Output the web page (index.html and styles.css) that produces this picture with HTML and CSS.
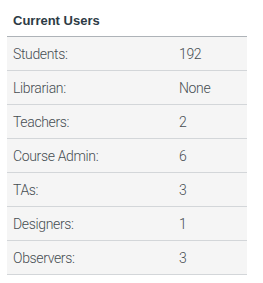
FILE: index.html
```html
<!DOCTYPE html>
<html>
<head>
<meta charset="utf-8">
<link rel="stylesheet" href="styles.css">
</head>
<body>
<section class="panel">
  <h2 class="panel-title">Current Users</h2>
  <div class="user-table">
    <div class="row"><span class="label">Students:</span><span class="value">192</span></div>
    <div class="row"><span class="label">Librarian:</span><span class="value">None</span></div>
    <div class="row"><span class="label">Teachers:</span><span class="value">2</span></div>
    <div class="row"><span class="label">Course Admin:</span><span class="value">6</span></div>
    <div class="row"><span class="label">TAs:</span><span class="value">3</span></div>
    <div class="row"><span class="label">Designers:</span><span class="value">1</span></div>
    <div class="row"><span class="label">Observers:</span><span class="value">3</span></div>
  </div>
</section>
</body>
</html>
```
FILE: styles.css
```css
html, body {
  margin: 0;
  padding: 0;
  background: #ffffff;
}
body {
  font-family: "Liberation Sans", Arial, sans-serif;
  color: #2d3b45;
}
.panel {
  padding-left: 7px;
  width: 240px;
}
.panel-title {
  margin: 0;
  font-size: 13px;
  font-weight: bold;
  height: 37px;
  line-height: 16px;
  padding: 13px 0 0 6px;
  box-sizing: border-box;
  border-bottom: 1px solid #aeb3b8;
  color: #2d3b45;
}
.user-table {
  display: flex;
  flex-direction: column;
}
.row {
  display: grid;
  grid-template-columns: 166px 1fr;
  height: 34px;
  box-sizing: border-box;
  align-items: center;
  background: #f5f5f5;
  border-bottom: 1px solid #d3d6d9;
  font-family: Roboto, "Liberation Sans", sans-serif;
  font-weight: 300;
  font-size: 14px;
  letter-spacing: -0.35px;
  color: #464d52;
}
.label {
  padding-left: 6px;
}
.value {
  padding-left: 6px;
}
```
